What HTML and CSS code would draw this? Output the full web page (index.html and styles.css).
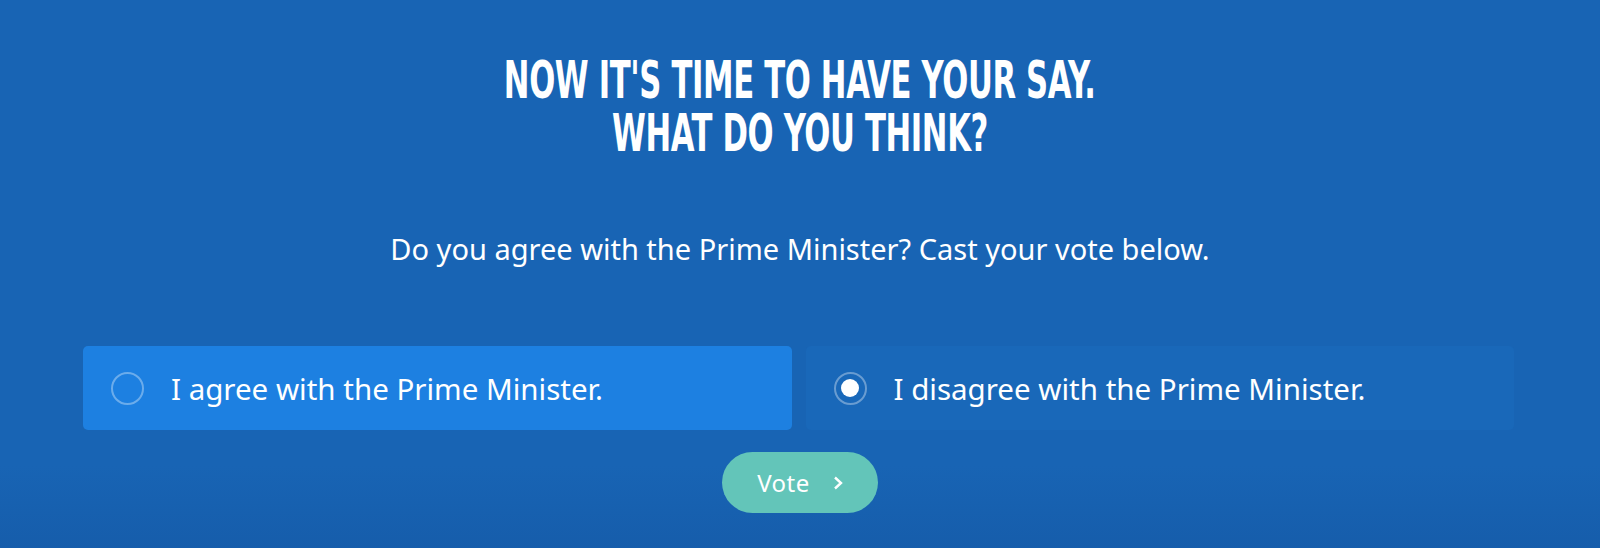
FILE: index.html
```html
<!DOCTYPE html>
<html lang="en">
  <head>
    <meta charset="UTF-8" />
    <meta name="viewport" content="width=device-width, initial-scale=1.0" />
    <title>Have your say</title>
    <link rel="stylesheet" href="styles.css">
  </head>
  <body>
    <section class="poll">
      <h2 class="poll-title">
        <span class="poll-line">NOW IT'S TIME TO HAVE YOUR SAY.</span>
        <span class="poll-line">WHAT DO YOU THINK?</span>
      </h2>
      <p class="poll-lead">
        Do you agree with the Prime Minister? Cast your vote below.
      </p>
      <form class="poll-form" onsubmit="return false">
        <div class="options">
          <label class="option option--hover">
            <input type="radio" name="vote" value="agree" />
            <span class="radio"></span>
            <span class="option-text">I agree with the Prime Minister.</span>
          </label>
          <label class="option">
            <input type="radio" name="vote" value="disagree" checked />
            <span class="radio"></span>
            <span class="option-text">I disagree with the Prime Minister.</span>
          </label>
        </div>
        <button type="submit" class="vote">
          Vote
          <svg width="12" height="16" viewBox="0 0 12 16">
            <path d="M3 2.5l6 5.5-6 5.5" fill="none" stroke="#fff" stroke-width="2.4" />
          </svg>
        </button>
      </form>
    </section>
  </body>
</html>
```

FILE: styles.css
```css
html,
body {
  margin: 0;
  height: 100%;
}
body {
  background: #1863b3;
  font-family: "Noto Sans", "Open Sans", sans-serif;
  color: #fff;
}
.poll {
  box-sizing: border-box;
  min-height: 100%;
  padding: 54px 0 0;
  background: linear-gradient(180deg, #1864b4 0%, #1864b4 85%, #165dab 100%);
  text-align: center;
}
.poll-title {
  display: flex;
  flex-direction: column;
  align-items: center;
  margin: 0;
  font-family: "DejaVu Sans", sans-serif;
  font-stretch: condensed;
  font-weight: bold;
  font-size: 52px;
  line-height: 53px;
  letter-spacing: -0.5px;
}
.poll-line {
  display: block;
  height: 53px;
  transform: scaleX(0.655);
}
.poll-lead {
  margin: 72px 0 0;
  font-size: 29px;
  line-height: 34px;
}
.poll-form {
  margin-top: 80px;
}
.options {
  display: grid;
  grid-template-columns: 1fr 1fr;
  gap: 14px;
  width: 1431px;
  margin: 0 auto 0 83px;
}
.option {
  display: flex;
  align-items: center;
  gap: 27px;
  height: 84px;
  padding: 0 28px;
  border-radius: 5px;
  background: #1968b9;
  font-size: 29.5px;
  text-align: left;
  cursor: pointer;
}
.option--hover {
  background: #1d80e1;
}
.option input {
  display: none;
}
.radio {
  box-sizing: border-box;
  flex: none;
  display: flex;
  align-items: center;
  justify-content: center;
  width: 33px;
  height: 33px;
  border: 2px solid rgba(255, 255, 255, 0.35);
  border-radius: 50%;
}
.option input:checked + .radio::after {
  content: "";
  width: 18px;
  height: 18px;
  border-radius: 50%;
  background: #fff;
}
.vote {
  display: inline-flex;
  align-items: center;
  gap: 22px;
  margin-top: 22px;
  height: 61px;
  padding: 0 34px 0 35px;
  border: none;
  border-radius: 31px;
  background: #63c5b9;
  color: #fff;
  font-family: "Noto Sans", "Open Sans", sans-serif;
  font-size: 24px;
  letter-spacing: 0.5px;
}
```
